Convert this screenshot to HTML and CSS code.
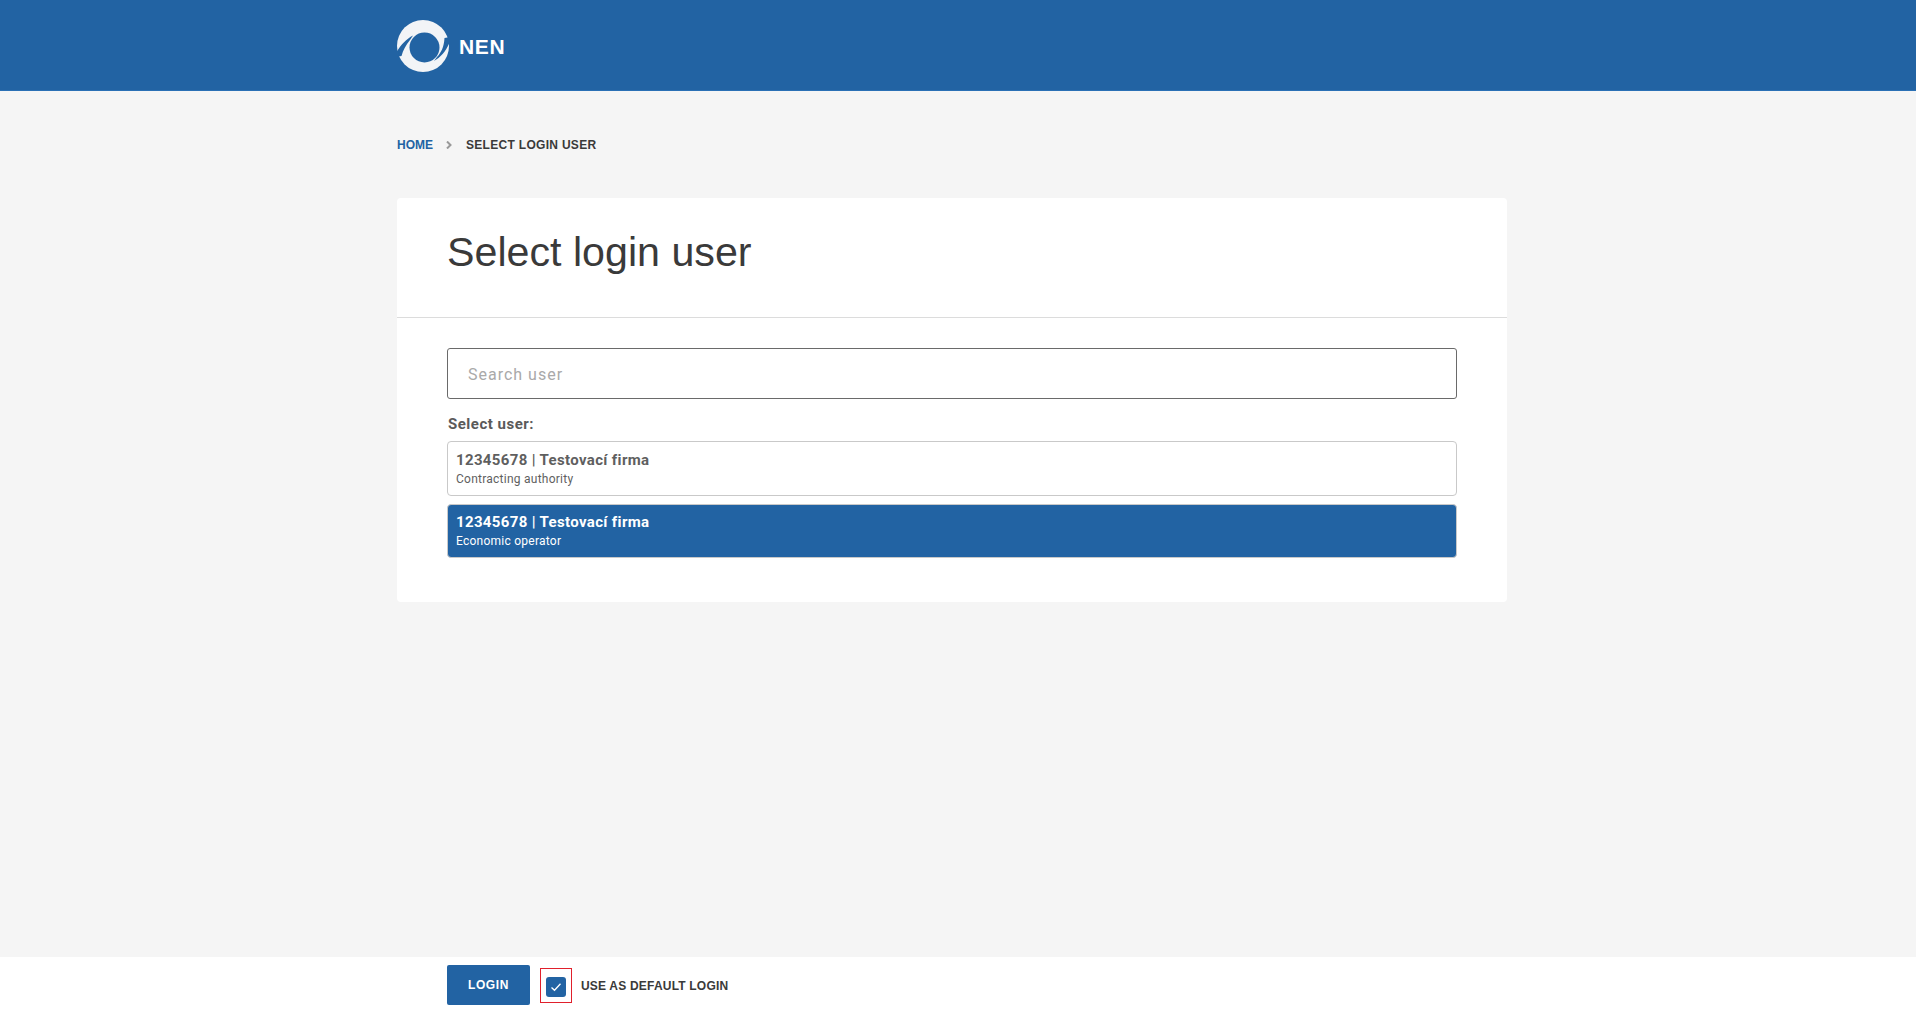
FILE: index.html
```html
<!doctype html>
<html>
  <head>
    <meta charset="UTF-8" />
    <title>NEN - Select login user</title>
    <link rel="stylesheet" href="styles.css">
  </head>
  <body>
    <header class="top-bar">
      <div class="container top-bar-inner">
        <svg class="logo" viewBox="0 0 52 52" width="52" height="52">
          <circle cx="26" cy="26" r="26" fill="#f2f4f7" />
          <circle cx="27.5" cy="27.5" r="15" fill="#2263a3" />
          <path d="M-1 33C3 26 9 19 16 15.5L13 20C9 25 6 30 4.5 36L-1 37Z" fill="#2263a3" />
          <path d="M53 21C50 30 44 37 37 41L40 37C44 33 47 27 47.5 18L53 17Z" fill="#2263a3" />
        </svg>
        <span class="brand">NEN</span>
      </div>
    </header>

    <main class="content">
      <div class="container">
        <nav class="breadcrumb">
          <a href="#">Home</a>
          <svg class="crumb-sep" viewBox="0 0 6 8" width="6" height="8">
            <path d="M1 .5L4.5 4 1 7.5" fill="none" stroke="#999" stroke-width="2" />
          </svg>
          <span>Select login user</span>
        </nav>

        <section class="card">
          <div class="card-head">
            <h1>Select login user</h1>
          </div>
          <div class="card-body">
            <input class="search" type="text" placeholder="Search user" />
            <div class="list-label">Select user:</div>
            <div class="user-row">
              <strong>12345678 | Testovací firma</strong>
              <small>Contracting authority</small>
            </div>
            <div class="user-row selected">
              <strong>12345678 | Testovací firma</strong>
              <small>Economic operator</small>
            </div>
          </div>
        </section>
      </div>
    </main>

    <footer class="bottom-bar">
      <div class="container bottom-bar-inner">
        <button class="login-btn">Login</button>
        <span class="check-focus">
          <span class="check">
            <svg viewBox="0 0 12 10" width="12" height="10">
              <path d="M1.5 5.5l3 2.8 6-6.6" fill="none" stroke="#fff" stroke-width="1.3" />
            </svg>
          </span>
        </span>
        <span class="check-label">Use as default login</span>
      </div>
    </footer>
  </body>
</html>
```

FILE: styles.css
```css
html,
body {
  height: 100%;
}

body {
  margin: 0;
  display: flex;
  flex-direction: column;
  min-height: 100vh;
  background: #f5f5f5;
  color: #3a3a3a;
  font-family: "Liberation Sans", Arial, sans-serif;
}

.container {
  width: 1110px;
  margin-left: 397px;
}

.top-bar {
  height: 91px;
  background: #2263a3;
  border-bottom: 1px solid #2a70b5;
  box-sizing: border-box;
  flex: none;
}

.top-bar-inner {
  display: flex;
  align-items: center;
  height: 92px;
}

.logo {
  display: block;
}

.brand {
  margin-top: 1px;
  margin-left: 10px;
  color: #fff;
  font-size: 21px;
  font-weight: 700;
  letter-spacing: 0.7px;
}

.content {
  flex: 1;
}

.breadcrumb {
  display: flex;
  align-items: center;
  height: 14px;
  margin-top: 47px;
  font-size: 12px;
  font-weight: 700;
  letter-spacing: 0.3px;
  text-transform: uppercase;
}

.breadcrumb a {
  color: #2263a3;
  letter-spacing: 0;
  text-decoration: none;
}

.crumb-sep {
  margin: 0 14px 0 13px;
}

.card {
  margin-top: 46px;
  background: #fff;
  border-radius: 4px;
}

.card-head {
  height: 119px;
  padding: 0 50px;
  border-bottom: 1px solid #dcdcdc;
}

.card-head h1 {
  margin: 0;
  padding-top: 31px;
  font-size: 41.2px;
  font-weight: 400;
  line-height: 46px;
}

.card-body {
  padding: 30px 50px 44px;
}

.search {
  display: block;
  box-sizing: border-box;
  width: 100%;
  height: 51px;
  padding: 2px 20px 0;
  border: 1px solid #6a6a6a;
  border-radius: 3px;
  outline: none;
  background: #fff;
  font-family: Roboto, sans-serif;
  font-size: 16px;
  letter-spacing: 1px;
}

.search::placeholder {
  color: #a9a9a9;
  opacity: 1;
}

.list-label {
  margin-top: 17px;
  padding-left: 1px;
  color: #5a5a5a;
  font-family: Roboto, sans-serif;
  font-size: 15px;
  font-weight: 700;
  line-height: 16px;
  letter-spacing: 0.5px;
}

.user-row {
  box-sizing: border-box;
  height: 55px;
  margin-top: 9px;
  padding: 9px 8px 0;
  border: 1px solid #c9c9c9;
  border-radius: 4px;
  background: #fff;
  color: #5f5f5f;
  font-family: Roboto, sans-serif;
}

.user-row + .user-row {
  height: 54px;
  margin-top: 8px;
  padding-top: 8px;
}

.user-row strong {
  display: block;
  font-size: 15px;
  line-height: 18px;
  letter-spacing: 0.35px;
}

.user-row small {
  display: block;
  margin-top: 2px;
  font-size: 12px;
  line-height: 16px;
  letter-spacing: 0.25px;
}

.user-row.selected {
  border-color: #c9c9c9;
  background: #2263a3;
  color: #fff;
}

.bottom-bar {
  flex: none;
  height: 54px;
  background: #fff;
}

.bottom-bar-inner {
  display: flex;
  align-items: center;
  height: 100%;
  padding-left: 50px;
  box-sizing: border-box;
}

.login-btn {
  width: 83px;
  height: 40px;
  margin-top: 2px;
  border: 0;
  border-radius: 2px;
  background: #2263a3;
  color: #fff;
  font-family: "Liberation Sans", Arial, sans-serif;
  font-size: 12px;
  font-weight: 700;
  letter-spacing: 0.6px;
  text-transform: uppercase;
}

.check-focus {
  display: flex;
  align-items: center;
  justify-content: center;
  box-sizing: border-box;
  width: 32px;
  height: 35px;
  margin-top: 2px;
  margin-left: 10px;
  border: 1px solid #e0202c;
}

.check {
  display: flex;
  align-items: center;
  justify-content: center;
  width: 20px;
  height: 20px;
  margin-top: 3px;
  border-radius: 3px;
  background: #2263a3;
}

.check-label {
  margin-top: 3px;
  margin-left: 9px;
  font-size: 12px;
  font-weight: 700;
  letter-spacing: 0.2px;
  text-transform: uppercase;
}
```
